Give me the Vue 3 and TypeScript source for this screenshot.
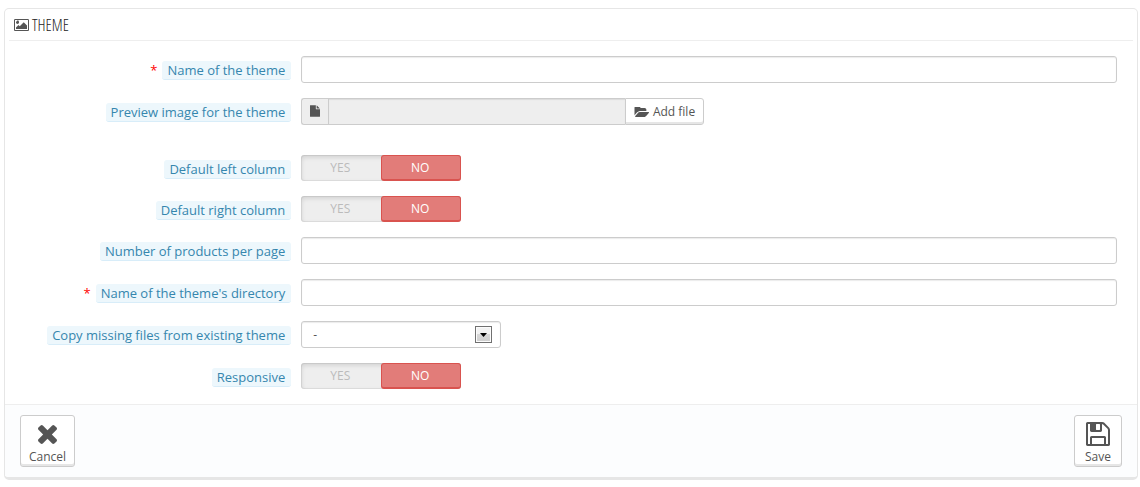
<script setup lang="ts">
import { reactive } from 'vue'

type Kind = 'text' | 'file' | 'switch' | 'select'

interface Field {
  id: string
  label: string
  kind: Kind
  required?: boolean
  spaced?: boolean
}

const fields: Field[] = [
  { id: 'name', label: 'Name of the theme', kind: 'text', required: true },
  { id: 'preview', label: 'Preview image for the theme', kind: 'file', spaced: true },
  { id: 'left-column', label: 'Default left column', kind: 'switch' },
  { id: 'right-column', label: 'Default right column', kind: 'switch' },
  { id: 'per-page', label: 'Number of products per page', kind: 'text' },
  { id: 'directory', label: "Name of the theme's directory", kind: 'text', required: true },
  { id: 'copy-from', label: 'Copy missing files from existing theme', kind: 'select' },
  { id: 'responsive', label: 'Responsive', kind: 'switch' },
]

const values = reactive<Record<string, string>>({
  name: '',
  preview: '',
  'left-column': 'no',
  'right-column': 'no',
  'per-page': '',
  directory: '',
  'copy-from': '-',
  responsive: 'no',
})
</script>

<template>
  <form class="panel" @submit.prevent>
    <h3 class="heading">
      <svg class="icon-picture" viewBox="-64 128 1920 1536" aria-hidden="true">
        <path d="M576 576q0 80-56 136t-136 56-136-56-56-136 56-136 136-136 136 56 56 136zm1024 384v448h-1408v-192l320-320 160 160 512-512zm96-704h-1600q-13 0-22.5 9.5t-9.5 22.5v1216q0 13 9.5 22.5t22.5 9.5h1600q13 0 22.5-9.5t9.5-22.5v-1216q0-13-9.5-22.5t-22.5-9.5zm160 32v1216q0 66-47 113t-113 47h-1600q-66 0-113-47t-47-113v-1216q0-66 47-113t113-47h1600q66 0 113 47t47 113z" />
      </svg>
      <span class="title">THEME</span>
    </h3>

    <div class="fields">
      <div v-for="f in fields" :key="f.id" class="row" :class="{ spaced: f.spaced }">
        <div class="label-col">
          <span v-if="f.required" class="star">*</span>
          <span v-if="f.kind === 'switch'" :id="f.id + '-label'" class="tag">{{ f.label }}</span>
          <label v-else :for="f.id" class="tag">{{ f.label }}</label>
        </div>

        <div class="control-col">
          <input v-if="f.kind === 'text'" :id="f.id" v-model="values[f.id]" class="box" type="text" />

          <div v-else-if="f.kind === 'file'" class="file">
            <span class="addon">
              <svg class="icon-file" viewBox="128 0 1536 1792" aria-hidden="true">
                <path d="M1152 512v-472q22 14 36 28l408 408q14 14 28 36h-472zm-128 32q0 40 28 68t68 28h544v1056q0 40-28 68t-68 28h-1344q-40 0-68-28t-28-68v-1600q0-40 28-68t68-28h800v544z" />
              </svg>
            </span>
            <input :id="f.id" class="file-name" type="text" :value="values[f.id]" readonly />
            <button class="add" type="button">
              <svg class="icon-folder" viewBox="0 256 1943 1280" aria-hidden="true">
                <path d="M1943 952q0 31-31 66l-336 396q-43 51-120.5 86.5t-143.5 35.5h-1088q-34 0-60.5-13t-26.5-43q0-31 31-66l336-396q43-51 120.5-86.5t143.5-35.5h1088q34 0 60.5 13t26.5 43zm-343-344v160h-832q-94 0-197 47.5t-164 119.5l-337 396-5 6q0-4-.5-12.5t-.5-12.5v-960q0-92 66-158t158-66h320q92 0 158 66t66 158v32h544q92 0 158 66t66 158z" />
              </svg>
              <span>Add file</span>
            </button>
          </div>

          <div v-else-if="f.kind === 'select'" class="select">
            <select :id="f.id" v-model="values[f.id]" class="box">
              <option value="-">-</option>
            </select>
            <span class="arrow" aria-hidden="true">
              <svg viewBox="0 0 7 4"><path d="M0 0h7L3.5 4z" /></svg>
            </span>
          </div>

          <div v-else class="switch" role="radiogroup" :aria-labelledby="f.id + '-label'">
            <label class="option yes">
              <input v-model="values[f.id]" type="radio" :name="f.id" value="yes" />
              <span>YES</span>
            </label>
            <label class="option no">
              <input v-model="values[f.id]" type="radio" :name="f.id" value="no" />
              <span>NO</span>
            </label>
          </div>
        </div>
      </div>
    </div>

    <div class="footer">
      <button class="action" type="button">
        <span class="glyph">
          <svg class="icon-cancel" viewBox="302 366 1188 1188" aria-hidden="true">
            <path d="M1490 1322q0 40-28 68l-136 136q-28 28-68 28t-68-28l-294-294-294 294q-28 28-68 28t-68-28l-136-136q-28-28-28-68t28-68l294-294-294-294q-28-28-28-68t28-68l136-136q28-28 68-28t68 28l294 294 294-294q28-28 68-28t68 28l136 136q28 28 28 68t-28 68l-294 294 294 294q28 28 28 68z" />
          </svg>
        </span>
        <span>Cancel</span>
      </button>
      <button class="action" type="submit">
        <span class="glyph">
          <svg class="icon-save" viewBox="128 128 1536 1536" aria-hidden="true">
            <path d="M512 1536h768v-384h-768v384zm896 0h128v-896q0-14-10-38.5t-20-34.5l-281-281q-10-10-34-20t-39-10v416q0 40-28 68t-68 28h-576q-40 0-68-28t-28-68v-416h-128v1280h128v-416q0-40 28-68t68-28h832q40 0 68 28t28 68v416zm-384-928v-320q0-13-9.5-22.5t-22.5-9.5h-192q-13 0-22.5 9.5t-9.5 22.5v320q0 13 9.5 22.5t22.5 9.5h192q13 0 22.5-9.5t9.5-22.5zm640 32v928q0 40-28 68t-68 28h-1344q-40 0-68-28t-28-68v-1344q0-40 28-68t68-28h928q40 0 88 20t76 48l280 280q28 28 48 76t20 88z" />
          </svg>
        </span>
        <span>Save</span>
      </button>
    </div>
  </form>
</template>

<style>
body {
  margin: 0;
  background: #fff;
}
</style>

<style scoped>
* {
  box-sizing: border-box;
}

.panel {
  margin: 8px 2px 0 4px;
  border: 1px solid #e6e6e6;
  border-bottom-width: 3px;
  border-radius: 5px;
  background: #fff;
  color: #555;
  font-family: "Open Sans", "Noto Sans", sans-serif;
  font-size: 12px;
}

svg {
  display: block;
  flex: none;
  fill: currentColor;
}

.heading {
  display: flex;
  align-items: center;
  gap: 3px;
  height: 32px;
  margin: 0 4px;
  padding: 0 5px;
  border-bottom: 1px solid #eee;
  font-family: "Open Sans Condensed Light", "Open Sans", sans-serif;
  font-size: 16px;
  font-weight: 400;
}

.title {
  color: #222;
}

.icon-picture {
  width: 15px;
  height: 12px;
}

.fields {
  display: flex;
  flex-direction: column;
  gap: 15px;
  padding: 15px 15px 15px 16px;
}

.row {
  display: grid;
  grid-template-columns: 25% 75%;
  align-items: start;
}

.row.spaced {
  margin-bottom: 15px;
}

.label-col {
  display: flex;
  justify-content: flex-end;
  gap: 5px;
  padding: 5px 5px 0;
  font-size: 13px;
  line-height: 18px;
  white-space: nowrap;
}

.star {
  color: #f00;
  font-size: 13px;
}

.tag {
  padding: 0 6px 0 5px;
  border-bottom: 1px solid #d8edf9;
  border-radius: 3px;
  background: #edf7fc;
  color: #3586ae;
}

.control-col {
  padding: 0 5px;
}

.box {
  display: block;
  width: 100%;
  height: 27px;
  margin: 0;
  padding: 0 11px;
  border: 1px solid #ccc;
  border-radius: 3px;
  background: #fff;
  box-shadow: inset 0 1px 1px rgba(0, 0, 0, 0.08);
  color: #555;
  font: inherit;
}

.file {
  display: flex;
  width: calc(50% - 5px);
  min-width: 260px;
  height: 27px;
}

.addon {
  display: flex;
  align-items: center;
  justify-content: center;
  width: 27px;
  padding-bottom: 2px;
  border: 1px solid #ccc;
  border-right: 0;
  border-radius: 3px 0 0 3px;
  background: #eee;
}

.icon-file {
  width: 10px;
  height: 12px;
}

.file-name {
  flex: 1;
  min-width: 0;
  margin: 0;
  padding: 0 8px;
  border: 1px solid #ccc;
  border-right: 0;
  border-radius: 0;
  background: #eee;
  box-shadow: inset 0 1px 1px rgba(0, 0, 0, 0.08);
  color: #555;
  font: inherit;
}

.add {
  display: flex;
  align-items: center;
  gap: 4px;
  margin: 0;
  padding: 0 8px;
  border: 1px solid #ccc;
  border-radius: 0 3px 3px 0;
  background: #fff;
  box-shadow: inset 0 -2px 0 #e6e6e6;
  color: #555;
  font: inherit;
  white-space: nowrap;
}

.icon-folder {
  width: 15px;
  height: 10px;
}

.select {
  position: relative;
  width: 200px;
}

.select .box {
  appearance: none;
}

.arrow {
  position: absolute;
  top: 5px;
  right: 9px;
  display: flex;
  align-items: center;
  justify-content: center;
  width: 17px;
  height: 17px;
  border: 1px solid #707070;
  background: linear-gradient(#f2f2f2 50%, #d8d8d8 50%, #cfcfcf);
  box-shadow: inset 0 0 0 1px #fcfcfc;
  color: #000;
  pointer-events: none;
}

.arrow svg {
  width: 7px;
  height: 4px;
}

.switch {
  display: flex;
  width: 160px;
  height: 26px;
  border-radius: 3px;
  background: #eee;
  box-shadow: inset 0 0 0 1px rgba(0, 0, 0, 0.06), inset 0 2px 5px rgba(0, 0, 0, 0.14);
}

.option {
  position: relative;
  display: flex;
  flex: 1;
  align-items: center;
  justify-content: center;
  padding-right: 2px;
  border: 1px solid transparent;
  border-bottom-width: 2px;
  border-radius: 3px;
  color: #bbb;
  cursor: pointer;
}

.option input {
  position: absolute;
  inset: 0;
  width: 100%;
  height: 100%;
  margin: 0;
  opacity: 0;
  cursor: pointer;
}

.no:has(input:checked) {
  border-color: #d9534f;
  background: #e27c79;
  color: #fff;
}

.yes:has(input:checked) {
  border-color: #72c279;
  background: #92d097;
  color: #fff;
}

.footer {
  display: flex;
  justify-content: space-between;
  padding: 10px 15px;
  border-top: 1px solid #eee;
  border-radius: 0 0 4px 4px;
  background: #fcfdfe;
}

.action {
  display: flex;
  flex-direction: column;
  align-items: center;
  min-width: 48px;
  height: 52px;
  margin: 0;
  padding: 3px 8px 0;
  border: 1px solid #ccc;
  border-radius: 3px;
  background: #fff;
  box-shadow: inset 0 -2px 0 #e6e6e6;
  color: #555;
  font: inherit;
  line-height: 16px;
}

.glyph {
  display: flex;
  align-items: center;
  justify-content: center;
  height: 30px;
}

.icon-cancel {
  width: 19px;
  height: 19px;
}

.icon-save {
  width: 24px;
  height: 24px;
}
</style>
